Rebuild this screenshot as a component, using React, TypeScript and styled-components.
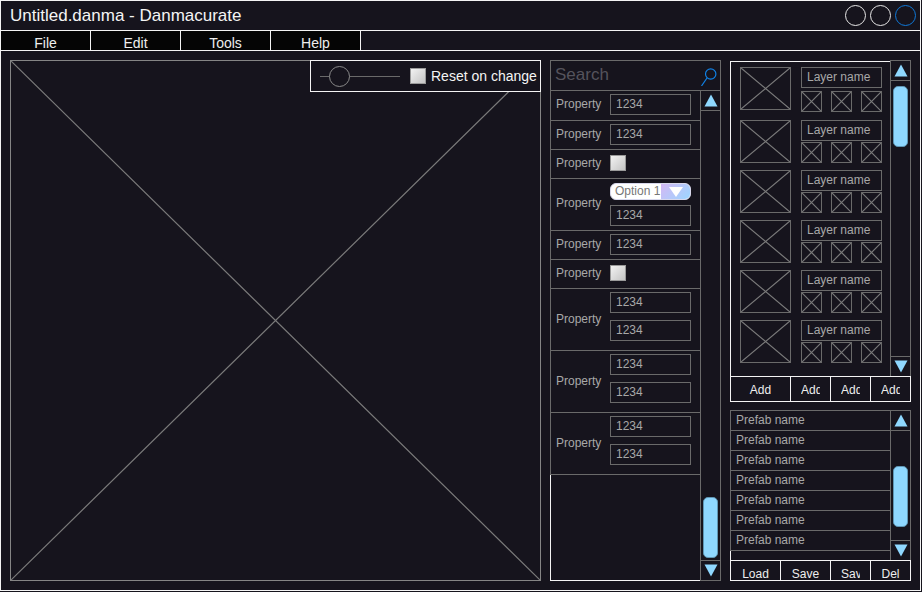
import React from "react";
import styled, { createGlobalStyle } from "styled-components";

const GlobalStyle = createGlobalStyle`
  html, body {
    margin: 0;
    padding: 0;
    background: #16141d;
    font-family: "Liberation Sans", Arial, sans-serif;
  }
  * {
    box-sizing: border-box;
  }
`;

const line = "#6a6a6a";
const white = "#f4f4f4";
const sky = "#8fd8ff";

function CrossBox({ className }: { className?: string }) {
  return (
    <svg className={className} viewBox="0 0 100 100" preserveAspectRatio="none">
      <path d="M0 0L100 100M100 0L0 100" stroke="#7a7a7a" strokeWidth="1.2" vectorEffect="non-scaling-stroke" fill="none" />
    </svg>
  );
}

function Arrow({ down }: { down?: boolean }) {
  return (
    <svg width="14" height="13" viewBox="0 0 14 13">
      <path d={down ? "M0.5 0.5H13.5L7 12.5Z" : "M7 0.5L13.5 12.5H0.5Z"} fill={sky} />
    </svg>
  );
}

function ScrollBar({ top, height, capped }: { top: number; height: number; capped?: boolean }) {
  return (
    <Scroll $capped={capped}>
      <ScrollButton>
        <Arrow />
      </ScrollButton>
      <Track>
        <Thumb style={{ marginTop: top, height }} />
      </Track>
      <ScrollButton $down>
        <Arrow down />
      </ScrollButton>
    </Scroll>
  );
}

function Num() {
  return <NumberBox>1234</NumberBox>;
}

function Btn({ w, children }: { w: number; children: string }) {
  return (
    <PanelButton $w={w}>
      <ButtonLabel>{children}</ButtonLabel>
    </PanelButton>
  );
}

const layerTops = [5, 8, 7, 7, 7, 7];

export default function App() {
  return (
    <Window>
      <GlobalStyle />
      <TitleBar>
        <Title>Untitled.danma - Danmacurate</Title>
        <WindowButtons>
          <Circle />
          <Circle />
          <Circle $accent />
        </WindowButtons>
      </TitleBar>
      <MenuBar>
        {["File", "Edit", "Tools", "Help"].map((m) => (
          <MenuItem key={m}>{m}</MenuItem>
        ))}
      </MenuBar>

      <Main>
        <Canvas>
          <CanvasCross />
          <ViewBar>
            <Slider>
              <SliderKnob />
            </Slider>
            <Check />
            <ResetLabel>Reset on change</ResetLabel>
          </ViewBar>
        </Canvas>

        <Properties>
          <SearchRow>
            <SearchText>Search</SearchText>
            <svg width="17" height="20" viewBox="0 0 17 20">
              <circle cx="10.7" cy="8" r="5.2" fill="none" stroke="#1080e4" strokeWidth="1.2" />
              <path d="M7 12L1.5 20" stroke="#1080e4" strokeWidth="1.2" fill="none" />
            </svg>
          </SearchRow>
          <PropBody>
            <PropList>
              <PropRow $h={30}>
                <PropLabel $lift={4}>Property</PropLabel>
                <PropFields><Num /></PropFields>
              </PropRow>
              <PropRow $h={29}>
                <PropLabel>Property</PropLabel>
                <PropFields><Num /></PropFields>
              </PropRow>
              <PropRow $h={29}>
                <PropLabel>Property</PropLabel>
                <PropFields $top={5}><Check /></PropFields>
              </PropRow>
              <PropRow $h={52}>
                <PropLabel $lift={4}>Property</PropLabel>
                <PropFields $top={4} $gap={5}>
                  <Select>
                    <SelectText>Option 1</SelectText>
                    <SelectArrow>
                      <svg width="14" height="10" viewBox="0 0 14 10">
                        <path d="M0 0H14L7 10Z" fill="#ffffff" />
                      </svg>
                    </SelectArrow>
                  </Select>
                  <Num />
                </PropFields>
              </PropRow>
              <PropRow $h={29}>
                <PropLabel>Property</PropLabel>
                <PropFields><Num /></PropFields>
              </PropRow>
              <PropRow $h={29}>
                <PropLabel>Property</PropLabel>
                <PropFields $top={5}><Check /></PropFields>
              </PropRow>
              {[0, 1, 2].map((i) => (
                <PropRow key={i} $h={62}>
                  <PropLabel>Property</PropLabel>
                  <PropFields $gap={7}>
                    <Num />
                    <Num />
                  </PropFields>
                </PropRow>
              ))}
            </PropList>
            <ScrollBar top={386} height={61} />
          </PropBody>
        </Properties>

        <SideColumn>
          <LayersPanel>
            <PanelBody>
              <LayerList>
                {layerTops.map((t, i) => (
                  <LayerRow key={i} $top={t}>
                    <LayerThumb />
                    <LayerInfo $gap={i === 0 ? 3 : 1}>
                      <LayerName>Layer name</LayerName>
                      <LayerIcons>
                        <LayerIcon />
                        <LayerIcon />
                        <LayerIcon />
                      </LayerIcons>
                    </LayerInfo>
                  </LayerRow>
                ))}
              </LayerList>
              <ScrollBar top={5} height={61} capped />
            </PanelBody>
            <ButtonRow $h={26}>
              <Btn w={60}>Add</Btn>
              <Btn w={40}>Add</Btn>
              <Btn w={40}>Add</Btn>
              <Btn w={39}>Add</Btn>
            </ButtonRow>
          </LayersPanel>

          <PrefabPanel>
            <PanelBody>
              <PrefabList>
                {Array.from({ length: 7 }, (_, i) => (
                  <PrefabRow key={i}>Prefab name</PrefabRow>
                ))}
              </PrefabList>
              <ScrollBar top={35} height={61} capped />
            </PanelBody>
            <ButtonRow $h={21}>
              <Btn w={50}>Load</Btn>
              <Btn w={50}>Save</Btn>
              <Btn w={40}>Save</Btn>
              <Btn w={39}>Del</Btn>
            </ButtonRow>
          </PrefabPanel>
        </SideColumn>
      </Main>
    </Window>
  );
}

const Window = styled.div`
  width: 921px;
  height: 591px;
  border: 1px solid ${white};
  background: #16141d;
  display: flex;
  flex-direction: column;
`;

const TitleBar = styled.header`
  height: 30px;
  padding: 0 4px 0 9px;
  display: flex;
  align-items: center;
  justify-content: space-between;
  border-bottom: 1px solid ${white};
  flex: none;
`;

const Title = styled.div`
  font-size: 17px;
  color: ${white};
  margin-top: 1px;
`;

const WindowButtons = styled.div`
  display: flex;
  gap: 4px;
`;

const Circle = styled.div<{ $accent?: boolean }>`
  width: 21px;
  height: 21px;
  border-radius: 50%;
  border: 1px solid ${({ $accent }) => ($accent ? "#0f78d8" : "#e8e8e8")};
`;

const MenuBar = styled.nav`
  height: 20px;
  display: flex;
  border-bottom: 1px solid ${white};
  flex: none;
`;

const MenuItem = styled.div`
  width: 90px;
  background: #050505;
  border-right: 1px solid ${white};
  color: #eeeeee;
  font-size: 14px;
  text-align: center;
  line-height: 16px;
  padding-top: 4px;
  overflow: hidden;
`;

const Main = styled.main`
  flex: 1;
  padding: 9px 9px 0 9px;
  display: flex;
  align-items: flex-start;
`;

const Canvas = styled.section`
  position: relative;
  width: 531px;
  height: 521px;
  border: 1px solid #858585;
  flex: none;
`;

const CanvasCross = styled(CrossBox)`
  display: block;
  width: 100%;
  height: 100%;
`;

const ViewBar = styled.div`
  position: absolute;
  top: -1px;
  right: -1px;
  width: 231px;
  height: 32px;
  background: #16141d;
  border: 1px solid ${white};
  padding-left: 9px;
  display: flex;
  align-items: center;
`;

const Slider = styled.div`
  position: relative;
  width: 80px;
  height: 1px;
  background: ${line};
  margin-right: 10px;
  flex: none;
`;

const SliderKnob = styled.div`
  position: absolute;
  left: 9px;
  top: -10px;
  width: 21px;
  height: 21px;
  border-radius: 50%;
  background: #16141d;
  border: 1px solid #8a8a8a;
`;

const Check = styled.div`
  width: 16px;
  height: 16px;
  flex: none;
  background: linear-gradient(135deg, #f2f2f2, #c4c4c4);
  border: 1px solid #9a9a9a;
`;

const ResetLabel = styled.span`
  margin-left: 5px;
  color: ${white};
  font-size: 14px;
  white-space: nowrap;
`;

const Properties = styled.section`
  width: 171px;
  height: 521px;
  margin-left: 9px;
  flex: none;
  display: flex;
  flex-direction: column;
`;

const SearchRow = styled.div`
  height: 31px;
  flex: none;
  padding: 0 3px 0 4px;
  display: flex;
  align-items: center;
  justify-content: space-between;
  border: 1px solid ${line};
`;

const SearchText = styled.span`
  font-size: 17px;
  color: #55535c;
  margin-top: -2px;
`;

const PropBody = styled.div`
  flex: 1;
  min-height: 0;
  display: flex;
`;

const PropList = styled.div`
  flex: 1;
  min-width: 0;
  border-left: 1px solid ${white};
  border-bottom: 1px solid ${white};
`;

const PropRow = styled.div<{ $h: number }>`
  height: ${({ $h }) => $h}px;
  margin-left: -1px;
  border-left: 1px solid ${line};
  border-bottom: 1px solid ${line};
  padding-left: 5px;
  display: flex;
  align-items: center;
`;

const PropLabel = styled.div<{ $lift?: number }>`
  width: 54px;
  flex: none;
  color: #a8a8a8;
  font-size: 12px;
  padding-bottom: ${({ $lift }) => $lift ?? 2}px;
`;

const PropFields = styled.div<{ $top?: number; $gap?: number }>`
  align-self: flex-start;
  padding-top: ${({ $top }) => $top ?? 3}px;
  display: flex;
  flex-direction: column;
  gap: ${({ $gap }) => $gap ?? 7}px;
`;

const NumberBox = styled.div`
  width: 81px;
  height: 21px;
  border: 1px solid ${line};
  color: #a8a8a8;
  font-size: 12px;
  line-height: 19px;
  padding-left: 5px;
`;

const Select = styled.div`
  width: 81px;
  height: 17px;
  background: #ffffff;
  border: 1px solid #d8d8ec;
  border-radius: 6px;
  display: flex;
  overflow: hidden;
`;

const SelectText = styled.div`
  width: 50px;
  flex: none;
  padding-left: 4px;
  color: #777777;
  font-size: 12px;
  line-height: 15px;
  white-space: nowrap;
  overflow: hidden;
`;

const SelectArrow = styled.div`
  flex: 1;
  background: linear-gradient(135deg, #d4b8f4, #9bd6ff);
  display: flex;
  align-items: center;
  justify-content: center;
`;

const Scroll = styled.div<{ $capped?: boolean }>`
  width: 21px;
  flex: none;
  display: flex;
  flex-direction: column;
  border: 1px solid ${line};
  border-top-width: ${({ $capped }) => ($capped ? 1 : 0)}px;
  align-self: stretch;
`;

const ScrollButton = styled.div<{ $down?: boolean }>`
  height: 20px;
  flex: none;
  display: flex;
  align-items: center;
  justify-content: center;
  border-bottom: ${({ $down }) => ($down ? "0" : `1px solid ${line}`)};
  border-top: ${({ $down }) => ($down ? `1px solid ${line}` : "0")};
`;

const Track = styled.div`
  flex: 1;
  min-height: 0;
  padding: 0 2px;
`;

const Thumb = styled.div`
  background: ${sky};
  border: 1px solid #5f96b4;
  border-radius: 5px;
`;

const SideColumn = styled.div`
  margin-left: 9px;
  width: 181px;
  flex: none;
  display: flex;
  flex-direction: column;
  gap: 8px;
`;

const LayersPanel = styled.section`
  height: 342px;
  display: flex;
  flex-direction: column;
`;

const PrefabPanel = styled.section`
  height: 171px;
  display: flex;
  flex-direction: column;
`;

const PanelBody = styled.div`
  flex: 1;
  min-height: 0;
  display: flex;
`;

const LayerList = styled.div`
  flex: 1;
  min-width: 0;
  margin-top: 1px;
  border-top: 1px solid ${white};
  border-left: 1px solid ${white};
`;

const LayerRow = styled.div<{ $top: number }>`
  margin-top: ${({ $top }) => $top}px;
  padding-left: 9px;
  display: flex;
  align-items: flex-start;
  gap: 10px;
`;

const LayerThumb = styled(CrossBox)`
  width: 51px;
  height: 43px;
  border: 1px solid ${line};
  flex: none;
`;

const LayerInfo = styled.div<{ $gap: number }>`
  width: 81px;
  display: flex;
  flex-direction: column;
  gap: ${({ $gap }) => $gap}px;
`;

const LayerName = styled.div`
  height: 21px;
  border: 1px solid ${line};
  color: #a8a8a8;
  font-size: 12px;
  line-height: 19px;
  padding-left: 5px;
`;

const LayerIcons = styled.div`
  display: flex;
  justify-content: space-between;
`;

const LayerIcon = styled(CrossBox)`
  width: 21px;
  height: 21px;
  border: 1px solid ${line};
`;

const ButtonRow = styled.div<{ $h: number }>`
  height: ${({ $h }) => $h}px;
  margin-top: -1px;
  flex: none;
  display: flex;
  border: 1px solid ${white};
`;

const PanelButton = styled.div<{ $w: number }>`
  width: ${({ $w }) => $w}px;
  flex: none;
  border-right: 1px solid ${white};
  padding: 6px 10px 0;
  overflow: hidden;
  &:last-child {
    border-right: 0;
  }
`;

const ButtonLabel = styled.span`
  display: block;
  color: #eeeeee;
  font-size: 12px;
  line-height: 15px;
  text-align: center;
  white-space: nowrap;
  overflow: hidden;
`;

const PrefabList = styled.div`
  flex: 1;
  min-width: 0;
  border-left: 1px solid ${white};
`;

const PrefabRow = styled.div`
  height: 20px;
  margin-left: -1px;
  border-left: 1px solid ${line};
  border-bottom: 1px solid ${line};
  color: #a8a8a8;
  font-size: 12px;
  line-height: 18px;
  padding-left: 5px;
  &:first-child {
    height: 21px;
    border-top: 1px solid ${line};
  }
`;
